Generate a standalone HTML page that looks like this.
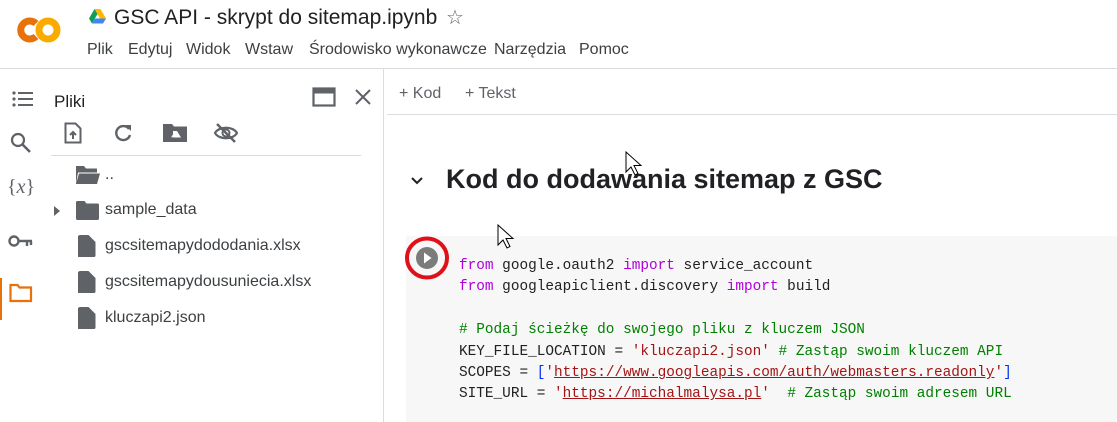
<!DOCTYPE html>
<html><head><meta charset="utf-8"><style>
*{margin:0;padding:0;box-sizing:border-box}
body{width:1117px;height:422px;overflow:hidden;background:#fff;font-family:"Liberation Sans",Arial,sans-serif;color:#202124;position:relative}
.a{position:absolute}
.m{position:absolute;top:41px;font-size:16px;color:#3c4043}
.code{font-family:"Liberation Mono",monospace;font-size:14.4px;color:#212121;white-space:pre;line-height:21.4px}
.k{color:#af00db}.s{color:#a31515}.c{color:#008000}.b{color:#0431fa}
.u{text-decoration:underline;text-decoration-color:#a31515}
.file{font-size:16px;color:#3c4043}
</style></head><body>
<!-- logo -->
<svg class="a" style="left:14px;top:14px" width="50" height="32" viewBox="0 0 50 32">
<circle cx="34" cy="16" r="9" fill="none" stroke="#f9ab00" stroke-width="7"/>
<path d="M22 9.5A9 9 0 1 0 22 22.5" fill="none" stroke="#e8710a" stroke-width="7"/>
</svg>
<svg class="a" style="left:89px;top:9px" width="17" height="15" viewBox="0 0 17 15">
<path d="M5.5 0h6l5.5 9.5h-6z" fill="#ffba00"/><path d="M5.5 0L0 9.5l3 5L8.5 5z" fill="#0f9d58"/><path d="M3 14.5h11l3-5H6z" fill="#4285f4"/>
</svg>
<div class="a" style="left:114px;top:6px;font-size:21px;color:#202124">GSC API - skrypt do sitemap.ipynb</div>
<div class="a" style="left:446px;top:5px;font-size:20px;color:#5f6368">☆</div>
<div class="m" style="left:87px">Plik</div>
<div class="m" style="left:128px">Edytuj</div>
<div class="m" style="left:186px">Widok</div>
<div class="m" style="left:245px">Wstaw</div>
<div class="m" style="left:309px">Środowisko wykonawcze</div>
<div class="m" style="left:494px">Narzędzia</div>
<div class="m" style="left:579px">Pomoc</div>
<div class="a" style="left:0;top:68px;width:1117px;height:1px;background:#dadce0"></div>
<!-- left rail -->
<svg class="a" style="left:12px;top:90px" width="22" height="18" viewBox="0 0 22 18" fill="#5f6368"><circle cx="2" cy="3" r="1.6"/><circle cx="2" cy="9" r="1.6"/><circle cx="2" cy="15" r="1.6"/><rect x="6" y="2" width="15" height="2"/><rect x="6" y="8" width="15" height="2"/><rect x="6" y="14" width="15" height="2"/></svg>
<svg class="a" style="left:10px;top:132px" width="22" height="22" viewBox="0 0 22 22"><circle cx="8" cy="8" r="6" fill="none" stroke="#5f6368" stroke-width="2.2"/><path d="M12.5 12.5L20 20" stroke="#5f6368" stroke-width="2.6"/></svg>
<div class="a" style="left:7px;top:176px;font-family:'Liberation Serif',serif;font-size:20px;color:#5f6368">{<i>x</i>}</div>
<svg class="a" style="left:8px;top:234px" width="26" height="14" viewBox="0 0 26 14"><circle cx="6" cy="7" r="4.5" fill="none" stroke="#5f6368" stroke-width="2.4"/><path d="M10 7h14M19 7v5M23 7v4" stroke="#5f6368" stroke-width="2.4"/></svg>
<div class="a" style="left:0;top:278px;width:2px;height:42px;background:#e8710a"></div>
<svg class="a" style="left:9px;top:283px" width="24" height="20" viewBox="0 0 24 20"><path d="M1.5 2h7l2 2.5h11.5v13.5h-20.5z" fill="none" stroke="#e8710a" stroke-width="2.2"/></svg>
<!-- panel -->
<div class="a" style="left:54px;top:92px;font-size:17px;color:#202124">Pliki</div>
<svg class="a" style="left:312px;top:87px" width="24" height="20" viewBox="0 0 24 20"><rect x="1.5" y="1.5" width="21" height="17" fill="none" stroke="#5f6368" stroke-width="2.2"/><rect x="1.5" y="1.5" width="21" height="5" fill="#5f6368"/></svg>
<svg class="a" style="left:354px;top:88px" width="18" height="18" viewBox="0 0 18 18"><path d="M2 2L16 16M16 2L2 16" stroke="#5f6368" stroke-width="2"/></svg>
<svg class="a" style="left:64px;top:122px" width="18" height="22" viewBox="0 0 18 22"><path d="M1.5 1.5h10l5 5v14h-15z" fill="none" stroke="#5f6368" stroke-width="2"/><path d="M9 17v-7M6 13l3-3 3 3" stroke="#5f6368" stroke-width="2" fill="none"/></svg>
<svg class="a" style="left:113px;top:123px" width="20" height="20" viewBox="0 0 20 20"><path d="M16 6A7 7 0 1 0 17 12" fill="none" stroke="#5f6368" stroke-width="2.4"/><path d="M12 2h6v6z" fill="#5f6368"/></svg>
<svg class="a" style="left:163px;top:124px" width="24" height="18" viewBox="0 0 24 18"><path d="M0 0h9l2 2.5h13v15.5h-24z" fill="#5f6368"/><path d="M10 7h4l4 6.5h-8z M8 13.5l2.5-4 2 3z" fill="#fff"/></svg>
<svg class="a" style="left:213px;top:122px" width="26" height="22" viewBox="0 0 26 22"><path d="M2 11C6 4 20 4 24 11C20 18 6 18 2 11z" fill="none" stroke="#5f6368" stroke-width="2.2"/><circle cx="13" cy="11" r="3.5" fill="none" stroke="#5f6368" stroke-width="2"/><path d="M4 2L22 20" stroke="#5f6368" stroke-width="2.4"/></svg>
<div class="a" style="left:51px;top:155px;width:310px;height:1px;background:#dadce0"></div>
<svg class="a" style="left:76px;top:166px" width="24" height="18" viewBox="0 0 24 18"><path d="M0 0h8l2 2.5h11v4h-19l-2 11.5z M3 7.5h21l-3 10.5h-21z" fill="#5f6368"/></svg>
<div class="a file" style="left:105px;top:166px">..</div>
<svg class="a" style="left:53px;top:205px" width="8" height="12"><path d="M1 1l6 5-6 5z" fill="#5f6368"/></svg>
<svg class="a" style="left:76px;top:201px" width="23" height="19" viewBox="0 0 23 19"><path d="M0 1.5A1.5 1.5 0 0 1 1.5 0h7l2 2.5h11a1.5 1.5 0 0 1 1.5 1.5v13.5a1.5 1.5 0 0 1-1.5 1.5h-20A1.5 1.5 0 0 1 0 17.5z" fill="#5f6368"/></svg>
<div class="a file" style="left:105px;top:201px">sample_data</div>
<svg class="a" style="left:78px;top:235px" width="18" height="22" viewBox="0 0 18 22"><path d="M1.5 0h9l7 7v13.5a1.5 1.5 0 0 1-1.5 1.5h-15a1.5 1.5 0 0 1-1.5-1.5v-19z" fill="#5f6368"/></svg>
<div class="a file" style="left:105px;top:237px">gscsitemapydododania.xlsx</div>
<svg class="a" style="left:78px;top:271px" width="18" height="22" viewBox="0 0 18 22"><path d="M1.5 0h9l7 7v13.5a1.5 1.5 0 0 1-1.5 1.5h-15a1.5 1.5 0 0 1-1.5-1.5v-19z" fill="#5f6368"/></svg>
<div class="a file" style="left:105px;top:273px">gscsitemapydousuniecia.xlsx</div>
<svg class="a" style="left:78px;top:307px" width="18" height="22" viewBox="0 0 18 22"><path d="M1.5 0h9l7 7v13.5a1.5 1.5 0 0 1-1.5 1.5h-15a1.5 1.5 0 0 1-1.5-1.5v-19z" fill="#5f6368"/></svg>
<div class="a file" style="left:105px;top:309px">kluczapi2.json</div>
<div class="a" style="left:383px;top:69px;width:1px;height:353px;background:#dadce0"></div>
<!-- toolbar -->
<div class="a" style="left:399px;top:85px;font-size:16px;color:#5f6368">+ Kod</div>
<div class="a" style="left:465px;top:85px;font-size:16px;color:#5f6368">+ Tekst</div>
<div class="a" style="left:387px;top:114px;width:730px;height:1px;background:#dadce0"></div>
<svg class="a" style="left:410px;top:176px" width="14" height="10"><path d="M2 2l5 5 5-5" fill="none" stroke="#202124" stroke-width="2"/></svg>
<div class="a" style="left:446px;top:164px;font-size:27px;font-weight:bold;color:#202124">Kod do dodawania sitemap z GSC</div>
<!-- cell -->
<div class="a" style="left:406px;top:236px;width:711px;height:186px;background:#f7f7f7"></div>
<svg class="a" style="left:403px;top:235px" width="50" height="50" viewBox="0 0 50 50"><ellipse cx="24" cy="23" rx="20" ry="19.5" fill="none" stroke="#e0101a" stroke-width="4"/><circle cx="24" cy="23" r="11" fill="#7b7b7b"/><path d="M21 17.5l7.5 5.5-7.5 5.5z" fill="#fff"/></svg>
<div class="a code" style="left:459px;top:256px"><span class="k">from</span> google.oauth2 <span class="k">import</span> service_account
<span class="k">from</span> googleapiclient.discovery <span class="k">import</span> build

<span class="c"># Podaj ścieżkę do swojego pliku z kluczem JSON</span>
KEY_FILE_LOCATION = <span class="s">'kluczapi2.json'</span> <span class="c"># Zastąp swoim kluczem API</span>
SCOPES = <span class="b">[</span><span class="s">'<span class="u">https://www.googleapis.com/auth/webmasters.readonly</span>'</span><span class="b">]</span>
SITE_URL = <span class="s">'<span class="u">https://michalmalysa.pl</span>'</span>  <span class="c"># Zastąp swoim adresem URL</span></div>
<svg class="a" style="left:625px;top:151px" width="18" height="26"><path d="M1 1v20l5-5 4 8 3-1.5-4-8h7z" fill="#fff" stroke="#000"/></svg>
<svg class="a" style="left:497px;top:224px" width="18" height="26"><path d="M1 1v20l5-5 4 8 3-1.5-4-8h7z" fill="#fff" stroke="#000"/></svg>
</body></html>
